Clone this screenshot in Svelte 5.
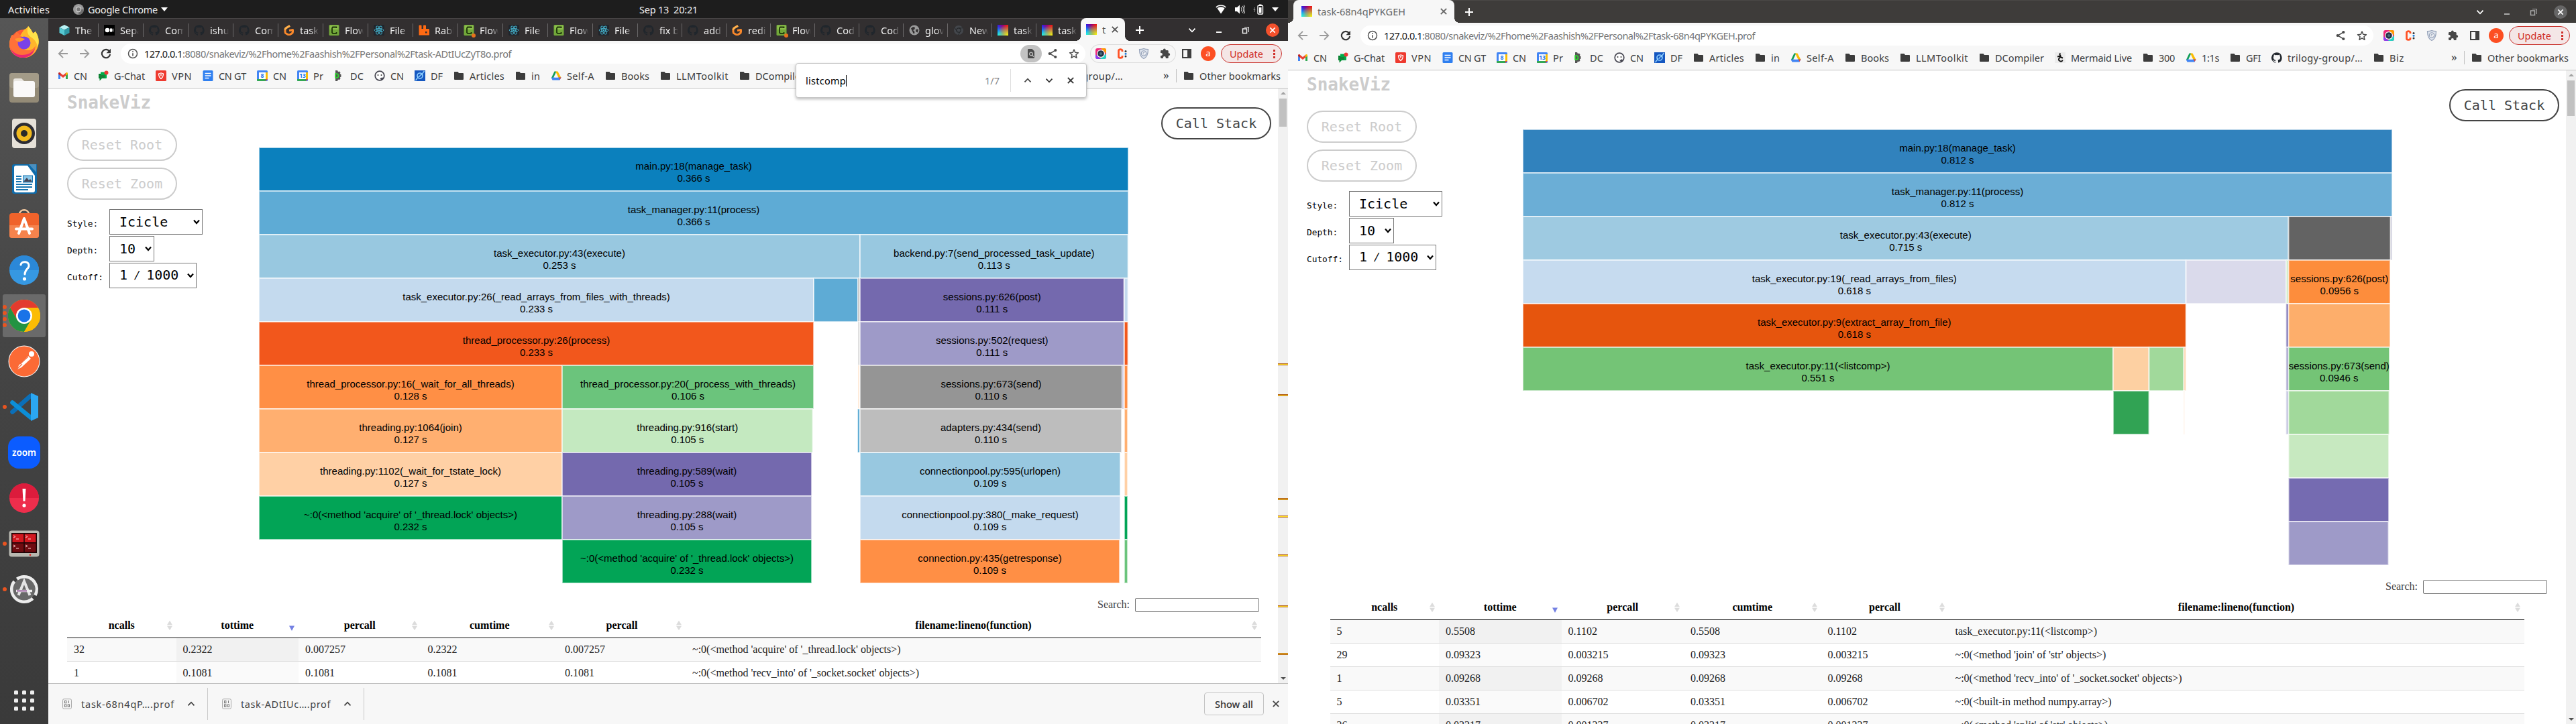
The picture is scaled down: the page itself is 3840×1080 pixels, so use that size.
<script>
  // Spread a label's letters so that it fills the given width.
  function fit(node, width) {
    if (!width) return;
    const now = node.getBoundingClientRect().width;
    const count = node.textContent.length;
    node.style.letterSpacing = (width - now) / count + 'px';
  }

  const dock = [
    { icon: 'firefox' }, { icon: 'files' }, { icon: 'rhythmbox' }, { icon: 'writer' },
    { icon: 'software' }, { icon: 'help' }, { icon: 'chrome', active: true, dots: 4 },
    { icon: 'postman' }, { icon: 'vscode', dots: 1 }, { icon: 'zoom' }, { icon: 'error' },
    { icon: 'terminator', dots: 1 }, { icon: 'updater', dots: 1 }
  ];

  const tabs = [
    ['cube', 'The'], ['medium', 'Sepa'], ['githubDark', 'Com'], ['githubDark', 'ishu'], ['githubDark', 'Com'],
    ['gorange', 'task'], ['cgreen', 'Flow'], ['react', 'File'], ['rabbit', 'Rabb'], ['cgreen', 'Flow', true],
    ['react', 'File'], ['cgreen', 'Flow'], ['react', 'File'], ['githubDark', 'fix b'], ['githubDark', 'add'],
    ['gorange', 'redi'], ['cgreen', 'Flow', true], ['githubDark', 'Cod'], ['githubDark', 'Cod'],
    ['globe', 'glov'], ['chromeDark', 'New'], ['rainbow', 'task'], ['rainbow', 'task']
  ];

  const bookmarks = [
    ['gmail', 'CN', 20], ['gchat', 'G-Chat', 46], ['vpn', 'VPN', 30], ['doc', 'CN GT', 41],
    ['cal8', 'CN', 20], ['cal13', 'Pr', 15], ['dc', 'DC', 20], ['face', 'CN', 20], ['df', 'DF', 18],
    ['folder', 'Articles', 52], ['folder', 'in', 13], ['drive', 'Self-A', 41], ['folder', 'Books', 42],
    ['folder', 'LLMToolkit', 78], ['folder', 'DCompiler', 73], ['mermaid', 'Mermaid Live', 91],
    ['folder', '300', 24], ['drive', '1:1s', 26], ['folder', 'GFI', 22], ['github', 'trilogy-group/…', 112],
    ['folder', 'Biz', 22]
  ];

  // Blocks: [row, start, end, colour, label, time]
  const chartA = [
    [0, 0, 1296, '#0b80bd', 'main.py:18(manage_task)', '0.366 s'],
    [1, 0, 1296, '#5eabd5', 'task_manager.py:11(process)', '0.366 s'],
    [2, 0, 896, '#98c8e0', 'task_executor.py:43(execute)', '0.253 s'],
    [2, 896, 1295.6, '#98c8e0', 'backend.py:7(send_processed_task_update)', '0.113 s'],
    [3, 0, 827, '#c4daee', 'task_executor.py:26(_read_arrays_from_files_with_threads)', '0.233 s'],
    [3, 827, 893, '#5eabd5'], [3, 893, 895.5, '#959595'],
    [3, 896, 1289.6, '#7469ae', 'sessions.py:626(post)', '0.111 s'],
    [3, 1290, 1295.5, '#c4daee'],
    [4, 0, 827, '#f2571c', 'thread_processor.py:26(process)', '0.233 s'],
    [4, 893, 895.5, '#bdbdbd'],
    [4, 896, 1289.6, '#9e9ac8', 'sessions.py:502(request)', '0.111 s'],
    [4, 1290, 1295.5, '#f2571c'],
    [5, 0, 452, '#ff8f45', 'thread_processor.py:16(_wait_for_all_threads)', '0.128 s'],
    [5, 452, 827, '#6bc47c', 'thread_processor.py:20(_process_with_threads)', '0.106 s'],
    [5, 893, 895, '#ffd0a5'],
    [5, 896, 1287, '#959595', 'sessions.py:673(send)', '0.110 s'],
    [5, 1286.8, 1289, '#9e9ac8'], [5, 1290, 1295.2, '#ff8f45'],
    [6, 0, 452, '#ffaf70', 'threading.py:1064(join)', '0.127 s'],
    [6, 452, 825.5, '#c4e9c0', 'threading.py:916(start)', '0.105 s'],
    [6, 892.6, 895.4, '#0b80bd'],
    [6, 896, 1286, '#bdbdbd', 'adapters.py:434(send)', '0.110 s'],
    [6, 1290, 1295, '#ffaf70'],
    [7, 0, 452, '#ffd0a5', 'threading.py:1102(_wait_for_tstate_lock)', '0.127 s'],
    [7, 452, 824, '#7469ae', 'threading.py:589(wait)', '0.105 s'],
    [7, 896, 1284, '#98c8e0', 'connectionpool.py:595(urlopen)', '0.109 s'],
    [7, 1290, 1295, '#ffd0a5'],
    [8, 0, 452, '#02a456', "~:0(<method 'acquire' of '_thread.lock' objects>)", '0.232 s'],
    [8, 452, 824, '#9e9ac8', 'threading.py:288(wait)', '0.105 s'],
    [8, 896, 1284, '#c4daee', 'connectionpool.py:380(_make_request)', '0.109 s'],
    [8, 1290, 1295, '#02a456'],
    [9, 452, 824, '#02a456', "~:0(<method 'acquire' of '_thread.lock' objects>)", '0.232 s'],
    [9, 896, 1283, '#ff8f45', 'connection.py:435(getresponse)', '0.109 s'],
    [9, 1290, 1295, '#6bc47c']
  ];
  const chartB = [
    [0, 0, 1296, '#3182bd', 'main.py:18(manage_task)', '0.812 s'],
    [1, 0, 1296, '#6baed6', 'task_manager.py:11(process)', '0.812 s'],
    [2, 0, 1141.5, '#9ecae1', 'task_executor.py:43(execute)', '0.715 s'],
    [2, 1141.5, 1294, '#636363'], [2, 1293.5, 1296, '#bdbdd0'],
    [3, 0, 988.6, '#c6dbef', 'task_executor.py:19(_read_arrays_from_files)', '0.618 s'],
    [3, 988.6, 1138, '#dadaeb'], [3, 1138, 1141.5, '#c7e9c0'],
    [3, 1141.5, 1293, '#fd8d3c', 'sessions.py:626(post)', '0.0956 s'],
    [4, 0, 988.6, '#e6550d', 'task_executor.py:9(extract_array_from_file)', '0.618 s'],
    [4, 1137.7, 1141.5, '#756bb1'], [4, 1141.5, 1293, '#fdae6b'],
    [5, 0, 880, '#74c476', 'task_executor.py:11(<listcomp>)', '0.551 s'],
    [5, 880, 933.5, '#fdd0a2'], [5, 933.5, 985.5, '#a1d99b'], [5, 985.5, 988.6, '#fdd0a2'],
    [5, 1137.7, 1141.5, '#9e9ac8'],
    [5, 1141.5, 1292, '#74c476', 'sessions.py:673(send)', '0.0946 s'],
    [6, 880, 933.5, '#31a354'], [6, 985, 986.5, '#fee6cf'], [6, 1137.7, 1141.5, '#bcbddc'],
    [6, 1141.5, 1291.5, '#a1d99b'],
    [7, 1141.5, 1291, '#c7e9c0'], [8, 1141.5, 1291, '#756bb1'], [9, 1141.5, 1290.5, '#9e9ac8']
  ];

  const headers = ['ncalls', 'tottime', 'percall', 'cumtime', 'percall', 'filename:lineno(function)'];
  const windows = [
    {
      id: 'a', url: ':8080/snakeviz/%2Fhome%2Faashish%2FPersonal%2Ftask-ADtIUcZyT8o.prof', urlWidth: 490, find: true,
      marks: bookmarks.slice(0, -1), chart: chartA,
      rows: [
        ['32', '0.2322', '0.007257', '0.2322', '0.007257', "~:0(<method 'acquire' of '_thread.lock' objects>)"],
        ['1', '0.1081', '0.1081', '0.1081', '0.1081', "~:0(<method 'recv_into' of '_socket.socket' objects>)"]
      ],
      downloads: [['task-68n4qP….prof', 139], ['task-ADtIUc….prof', 134]]
    },
    {
      id: 'b', url: ':8080/snakeviz/%2Fhome%2Faashish%2FPersonal%2Ftask-68n4qPYKGEH.prof', urlWidth: 496, find: false,
      marks: bookmarks, chart: chartB,
      rows: [
        ['5', '0.5508', '0.1102', '0.5508', '0.1102', 'task_executor.py:11(<listcomp>)'],
        ['29', '0.09323', '0.003215', '0.09323', '0.003215', "~:0(<method 'join' of 'str' objects>)"],
        ['1', '0.09268', '0.09268', '0.09268', '0.09268', "~:0(<method 'recv_into' of '_socket.socket' objects>)"],
        ['5', '0.03351', '0.006702', '0.03351', '0.006702', '~:0(<built-in method numpy.array>)'],
        ['26', '0.03217', '0.001237', '0.03217', '0.001237', "~:0(<method 'split' of 'str' objects>)"]
      ]
    }
  ];
  const findMarks = [410, 456, 611, 637, 695, 771, 842];
</script>

{#snippet octocat(color)}
  <path fill={color} d="M8 .2a8 8 0 0 0-2.5 15.6c.4 0 .5-.2.5-.4v-1.5c-2.2.5-2.7-1-2.7-1-.4-.9-.9-1.200-.9-1.200-.7-.5.1-.5.1-.5.8.1 1.200.8 1.200.8.7 1.300 1.900.9 2.300.7.1-.5.3-.9.5-1.100-1.800-.2-3.600-.9-3.600-4 0-.9.3-1.600.8-2.100-.1-.2-.4-1 .1-2.100 0 0 .7-.2 2.200.8a7.500 7.500 0 0 1 4 0c1.500-1 2.200-.8 2.200-.8.4 1.100.2 1.900.1 2.100.5.6.8 1.300.8 2.100 0 3.100-1.900 3.700-3.700 3.900.3.3.6.8.6 1.500v2.200c0 .2.1.5.6.4A8 8 0 0 0 8 .2z" />
{/snippet}

{#snippet small(name)}
  <svg class="ico" viewBox="0 0 16 16" width="16" height="16">
    {#if name === 'folder'}
      <path fill="#3c3c3c" d="M1.500 2h5l1.500 2h6a1 1 0 0 1 1 1v8a1 1 0 0 1-1 1H2a1 1 0 0 1-1-1V2.500z" />
    {:else if name === 'gmail'}
      <path fill="#4285f4" d="M1 4v9h3V6z" /><path fill="#34a853" d="M12 6v7h3V4z" />
      <path fill="#ea4335" d="M3.500 3.500 8 7l4.500-3.500V7.500L8 11 3.500 7.500z" />
      <path fill="#c5221f" d="M1 4.500C1 2.800 2.800 2.500 4 3.500v4.300L1 5.500z" /><path fill="#fbbc04" d="M15 4.500c0-1.700-1.800-2-3-1v4.300l3-2.300z" />
    {:else if name === 'gchat'}
      <path fill="#00832d" d="M1 5h5v7l-3.500 3.500V12H1z" /><path fill="#00ac47" d="M4 2.500h6l3 3V11a1 1 0 0 1-1 1H4z" />
      <path fill="#188038" d="M1 7h9v4H3z" /><circle cx="12.500" cy="3.500" r="3" fill="#ea3a35" />
    {:else if name === 'vpn'}
      <rect width="16" height="16" rx="1.500" fill="#ee3a2f" /><path d="M4.500 5 8 4l3.500 1c0 4-1 5.500-3.500 7.500C5.500 10.500 4.500 9 4.500 5z" fill="none" stroke="#fff" stroke-width="1.300" /><path d="M6.500 6h3L8 9z" fill="#fff" />
    {:else if name === 'doc'}
      <rect x=".5" width="15" height="16" rx="1.500" fill="#2f7ff0" /><path d="M3.500 4.500h9M3.500 8h9M3.500 11.500h6" stroke="#fff" stroke-width="1.600" />
    {:else if name === 'cal8' || name === 'cal13'}
      <rect width="16" height="16" rx="1.500" fill="#4285f4" /><path fill="#fbbc04" d="M13 3h3v10h-3z" /><path fill="#34a853" d="M0 13h13v3H1a1 1 0 0 1-1-1z" /><path fill="#ea4335" d="M13 13h3l-3 3z" />
      <rect x="3" y="3" width="10" height="10" fill="#fff" />
      <text x="8" y="11.200" font-size="8.500" font-weight="700" text-anchor="middle" fill="#1a73e8">{name === 'cal8' ? '8' : '13'}</text>
    {:else if name === 'dc'}
      <path fill="#555" d="M3 0h3l1 2 2-.6 1.500 1.800-.7 1.800 1.700 1.200v3.400l-1.700 1 .7 2-1.800 1.600L7 13.500 6 16H3z" transform="translate(-1 0)" />
      <path d="M2 5v6h1.500a3 3 0 0 0 0-6z" fill="none" stroke="#2be02b" stroke-width="1.600" />
    {:else if name === 'face'}
      <circle cx="8" cy="8" r="6.800" fill="#fff" stroke="#454550" stroke-width="1.700" /><circle cx="5.500" cy="7" r="1" fill="#333" /><circle cx="10.500" cy="7" r="1" fill="#333" /><path d="M8 11.500c2 0 3-.5 3.500-1.500l2 2-3 2.500z" fill="#454550" />
    {:else if name === 'df'}
      <rect width="16" height="16" fill="#1557c0" /><circle cx="8" cy="8" r="4" fill="none" stroke="#8fd0ff" stroke-width="1.600" /><path d="M1.500 15 6 9M10 7l4.500-6M7 9.500 9.500 6" stroke="#8fd0ff" stroke-width="1.400" />
    {:else if name === 'drive'}
      <path fill="#0f9d58" d="M5.500 1.500h3L3.500 12 1 11z" /><path fill="#fbbc04" d="M7 1.500h3.500L15.500 11h-4z" /><path fill="#4285f4" d="M3.500 10.500h12L13.500 14.500H2.500L.7 11z" /><path fill="#ea4335" d="M12 10.500h3.500L13.500 14z" /><path fill="#f7f7f7" d="M8 5.500 10.800 10.500H5.300z" />
    {:else if name === 'mermaid'}
      <rect width="16" height="16" fill="#ececec" /><path d="M8.500 1.500C5 4 11 5 8 7.500S5 12 8.500 13.500c1.500.5 3-.5 3-2M4 6.500l5-1M9 7.500l3 1" fill="none" stroke="#111" stroke-width="1.900" />
    {:else if name === 'github'}
      {@render octocat('#24292f')}
    {:else if name === 'githubDark'}
      {@render octocat('#20262c')}
    {:else if name === 'cube'}
      <path fill="#b8f1f4" d="M8 0 15.500 3.800 8 7.500.5 3.800z" /><path fill="#57c8d2" d="M.5 3.800 8 7.500V16L.5 12z" /><path fill="#2f98a5" d="M15.500 3.800 8 7.500V16l7.500-4z" />
    {:else if name === 'medium'}
      <rect width="16" height="16" fill="#000" /><circle cx="5" cy="8" r="3.300" fill="#fff" /><ellipse cx="10.500" cy="8" rx="1.600" ry="3.100" fill="#fff" /><ellipse cx="13.300" cy="8" rx=".7" ry="2.800" fill="#fff" />
    {:else if name === 'gorange'}
      <path d="M9 1.500 3.500 4.800A3 3 0 0 0 2 7.400v3A3 3 0 0 0 3.500 13l2.800 1.500a3 3 0 0 0 3 0l2.700-1.600A3 3 0 0 0 13.500 10V7.500L8 8.500" fill="none" stroke="#f9882b" stroke-width="3" stroke-linejoin="round" />
      <path d="m9 1.500-5.500 3.300A3 3 0 0 0 2 7.400" fill="none" stroke="#fdb04c" stroke-width="3" />
    {:else if name === 'cgreen'}
      <rect x=".5" width="15" height="16" rx="1.500" fill="#72a83a" /><path fill="#9fce58" d="M1.500 1h13v6h-13z" opacity=".6" /><path d="M11.500 5V3.500H6L5 5v6.500l1 1.300h5.500V11" fill="none" stroke="#1c3408" stroke-width="1.800" />
    {:else if name === 'react'}
      <rect width="16" height="16" rx="1.500" fill="#20252c" />
      <g fill="none" stroke="#46b6d0" stroke-width=".9"><ellipse cx="8" cy="8" rx="6.800" ry="2.600" /><ellipse cx="8" cy="8" rx="6.800" ry="2.600" transform="rotate(60 8 8)" /><ellipse cx="8" cy="8" rx="6.800" ry="2.600" transform="rotate(120 8 8)" /></g><circle cx="8" cy="8" r="1.300" fill="#46b6d0" />
    {:else if name === 'rabbit'}
      <path fill="#ff6a13" d="M.5 1.500a1 1 0 0 1 1-1h2a1 1 0 0 1 1 1V6h2.500V1.500a1 1 0 0 1 1-1h2a1 1 0 0 1 1 1V6h4a1 1 0 0 1 1 1v8.500H.5zM10 10v2.500h2.500V10z" />
    {:else if name === 'globe'}
      <circle cx="8" cy="8" r="7.500" fill="#9a9a9a" /><path d="M3 5.500 6 3l3 1-.5 2.500L6 8l2 1.500.500 3-2 .5L5 9.500zM10 7l4-.5-1 5-2.500-1z" fill="#322f30" />
    {:else if name === 'chromeDark'}
      <circle cx="8" cy="8" r="7" fill="#43464b" /><circle cx="8" cy="8" r="3.200" fill="#43464b" stroke="#26282b" stroke-width="1.200" /><path d="M8 4.800h6.500M5.200 9.600 2 4M10.800 9.600 7.500 15" stroke="#26282b" stroke-width="1" />
    {:else if name === 'find'}
      <path fill="#4a4a4a" d="M3.500 1h6l3.500 3.500v9A1.500 1.500 0 0 1 11.500 15h-7A1.500 1.500 0 0 1 3 13.500v-11z" /><circle cx="8" cy="8.500" r="2.300" fill="none" stroke="#c4c4c4" stroke-width="1.300" /><path d="m9.500 10.200 2.500 2.500" stroke="#c4c4c4" stroke-width="1.300" />
    {:else if name === 'share'}
      <path d="M12 3.200 4 8l8 4.800" fill="none" stroke="#4a4a4a" stroke-width="1.500" /><circle cx="12.300" cy="3" r="2.100" fill="#4a4a4a" /><circle cx="3.700" cy="8" r="2.100" fill="#4a4a4a" /><circle cx="12.300" cy="13" r="2.100" fill="#4a4a4a" />
    {:else if name === 'star'}
      <path d="m8 2 1.800 4.300 4.600.4-3.500 3 1.100 4.600L8 11.800l-4 2.500 1.100-4.600-3.500-3 4.600-.4z" fill="none" stroke="#4a4a4a" stroke-width="1.500" stroke-linejoin="round" />
    {:else if name === 'back'}
      <path d="M15 8H2M8 1.800 1.800 8 8 14.200" fill="none" stroke="#9b9b9b" stroke-width="1.900" />
    {:else if name === 'forward'}
      <path d="M1 8h13M8 1.800 14.200 8 8 14.200" fill="none" stroke="#9b9b9b" stroke-width="1.900" />
    {:else if name === 'reload'}
      <path d="M13 4.300A6.200 6.200 0 1 0 14.200 9" fill="none" stroke="#333" stroke-width="2.100" /><path fill="#333" d="M15 .8v6.500H8.500z" />
    {:else if name === 'info'}
      <circle cx="8" cy="8" r="6.500" fill="none" stroke="#555" stroke-width="1.500" /><path d="M8 7.200v4.300M8 4.300v1.600" stroke="#555" stroke-width="1.600" />
    {:else if name === 'lens'}
      <rect width="16" height="16" rx="3" fill="#ee2a7b" /><path fill="#ff9d00" d="M8 0h5a3 3 0 0 1 3 3v5z" /><path fill="#27d3c3" d="M16 8v5a3 3 0 0 1-3 3H6z" /><path fill="#8a3ff0" d="M0 9v4a3 3 0 0 0 3 3h5z" /><circle cx="8" cy="8" r="6" fill="#fff" /><circle cx="8" cy="8" r="4.800" fill="#243447" /><circle cx="8" cy="8" r="2" fill="#47697c" />
    {:else if name === 'cmark'}
      <path d="M8 5V3.500C8 1 2.500 1 2.500 3.500v9C2.500 15 8 15 8 12.500V11" fill="none" stroke="#ff5226" stroke-width="2.800" /><circle cx="13" cy="4.500" r="1.500" fill="#333" /><circle cx="13" cy="8.200" r="1.500" fill="#1f7ce0" /><circle cx="13" cy="12" r="1.500" fill="#333" />
    {:else if name === 'shield'}
      <path d="M8 .5c2 1 4 1.200 6.500 1.200C14.500 9 13 13 8 15.500 3 13 1.500 9 1.500 1.700 4 1.700 6 1.500 8 .5z" fill="#dfe5ee" stroke="#98a4ba" stroke-width="1.200" /><circle cx="8" cy="7.500" r="3.600" fill="#fff" stroke="#98a4ba" stroke-width="1.400" /><path d="M9.500 6.300H7v2.500h2.500" fill="none" stroke="#98a4ba" />
    {:else if name === 'puzzle'}
      <path fill="#474747" d="M13.700 7.300h-1V4.500A1.300 1.300 0 0 0 11.400 3H8.700V2.300a1.900 1.900 0 0 0-3.800 0V3H2.300A1.300 1.300 0 0 0 1 4.300V7h.9a2 2 0 0 1 0 4H1v2.600A1.300 1.300 0 0 0 2.300 15h2.500v-1a2 2 0 0 1 4 0v1h2.600a1.300 1.300 0 0 0 1.300-1.300V11h1a1.900 1.900 0 0 0 0-3.700z" />
    {:else if name === 'panel'}
      <path fill="#3f3f3f" d="M1 1h14v14H1zM3 3v10h6V3z" fill-rule="evenodd" />
    {:else if name === 'file'}
      <rect x="1.500" y=".7" width="13" height="14.600" rx="2" fill="#f4f4f4" stroke="#a9a9a9" /><g fill="none" stroke="#777"><rect x="4.500" y="3.500" width="2.400" height="3.200" /><path d="M10.500 3v4" /><rect x="4.500" y="9" width="2.400" height="3.200" /><rect x="9.200" y="9" width="2.400" height="3.200" /></g>
    {:else if name === 'up'}
      <path d="m3.500 10.300 4.500-4.600 4.500 4.600" fill="none" stroke="#444" stroke-width="1.800" />
    {:else if name === 'down'}
      <path d="m3.500 5.700 4.500 4.600 4.500-4.600" fill="none" stroke="currentColor" stroke-width="1.800" />
    {:else if name === 'cross'}
      <path d="m3.800 3.800 8.400 8.400M12.200 3.800l-8.400 8.400" fill="none" stroke="currentColor" stroke-width="1.800" />
    {:else if name === 'plus'}
      <path d="M8 2v12M2 8h12" stroke="#fff" stroke-width="2" />
    {/if}
  </svg>
{/snippet}

{#snippet favicon(name)}
  {#if name === 'rainbow'}<span class="rainbow"></span>{:else}{@render small(name)}{/if}
{/snippet}

{#snippet big(name)}
  <svg viewBox="0 0 48 48" width="48" height="48">
    {#if name === 'firefox'}
      <circle cx="24" cy="26" r="21" fill="#ff5a36" /><path fill="#ffb52b" d="M24 5c3-1 6-4 6-5 4 4 6 8 7 11l4-3c6 9 6 19 2 26-4 8-11 13-19 13C11 47 2 39 2 27c0-6 2-11 4-14l3 2 4-6 5 5z" />
      <path fill="#ff7139" d="M2 27c0-6 2-11 4-14l3 2 4-6 5 5 5 3-5 6c0 8 5 13 12 13 5 0 9-3 11-7 0 10-8 18-18 18C11 47 2 39 2 27z" /><path fill="#e6197d" d="M3 32c3 6 9 11 18 11 9 0 15-4 19-9-3 8-9 13-18 13-10 0-16-6-19-15z" opacity=".85" />
      <path fill="#ffe14a" d="M30 0c4 4 6 8 7 11l4-3c5 8 6 16 3 23-1-6-4-11-9-14-5-3-8-8-5-17z" />
      <circle cx="24" cy="25" r="9.500" fill="#7a42e8" /><path fill="#ff9a2e" d="M10 19c5-2 10-2 15 0-2 3-6 3-8 5-3-1-6-3-7-5z" />
    {:else if name === 'files'}
      <rect x="2" y="2" width="44" height="44" rx="4" fill="#948b77" /><rect x="2" y="2" width="44" height="22" rx="4" fill="#a39b88" /><path fill="#e9e6e0" d="M8 13a3 3 0 0 1 3-3h9l4 4h14v6H8z" /><rect x="8" y="14" width="32" height="24" rx="3" fill="#faf9f8" />
    {:else if name === 'rhythmbox'}
      <rect x="6" y="2" width="36" height="44" rx="4" fill="#e6e1d8" /><circle cx="24" cy="24" r="16" fill="#2c2c33" /><circle cx="24" cy="24" r="11.500" fill="#f2ba1d" /><circle cx="24" cy="24" r="5" fill="#2a2a2a" />
    {:else if name === 'writer'}
      <path fill="#0f6cab" d="M9 2h34v41a3 3 0 0 1-3 3H9a3 3 0 0 1-3-3V5a3 3 0 0 1 3-3z" /><path fill="#fff" d="M9 7a3 3 0 0 1 3-3h17l11 15v22a3 3 0 0 1-3 3H12a3 3 0 0 1-3-3z" /><path fill="#4a8fbf" d="M31 2h11v12z" /><path d="M12 20h8M12 24h8M12 28h8M12 32h24M12 36h24M12 40h18" stroke="#1775b1" stroke-width="1.800" /><rect x="22.500" y="19" width="14" height="10" fill="#8cc8ea" stroke="#1775b1" /><path d="m23 28 5-6 3 4 2-2 3 4z" fill="#445" />
    {:else if name === 'software'}
      <path d="M17 9c0-9 14-9 14 0" fill="none" stroke="#f5c9a0" stroke-width="2.500" /><rect x="2" y="7" width="44" height="37" rx="4" fill="#f0632b" /><path fill="#f5834d" d="M2 25h44v15a4 4 0 0 1-4 4H6a4 4 0 0 1-4-4z" /><path d="M16 37 24 15l8 22M12 30.500h24" fill="none" stroke="#fff" stroke-width="4" stroke-linejoin="round" stroke-linecap="round" />
    {:else if name === 'help'}
      <circle cx="24" cy="24" r="22" fill="#3698e2" /><path fill="#2b88d8" d="M2 24a22 22 0 0 1 44 0z" /><path d="M19 16c1-6 13-6 12 2-.5 4-6 5-6 12" fill="none" stroke="#fff" stroke-width="3" stroke-linecap="round" /><circle cx="24.500" cy="37" r="2.600" fill="#fff" />
    {:else if name === 'chrome'}
      <circle cx="24" cy="24" r="24" fill="#fbbc04" /><path fill="#e33b2e" d="M3.200 12A24 24 0 0 1 44.800 12H24L13.600 30z" /><path fill="#229342" d="M3.200 12A24 24 0 0 0 24 48l10.400-18-10.400 6-10.400-6z" /><path fill="#fbbc04" d="M24 48a24 24 0 0 0 20.800-36H24l10.400 18z" /><circle cx="24" cy="24" r="12" fill="#fff" /><circle cx="24" cy="24" r="9.400" fill="#1a73e8" />
    {:else if name === 'postman'}
      <circle cx="24" cy="24" r="23.500" fill="#fff" /><circle cx="24" cy="24" r="22.500" fill="#fb6a35" /><circle cx="35" cy="13" r="4" fill="#fff" /><path fill="#fff" d="m30 16 4 4-14 13-6 3 2-6z" /><path d="m13 36 8-8M18 28l12-11" stroke="#f2693c" stroke-width="1.200" />
    {:else if name === 'vscode'}
      <path d="M6.500 31.500 33 8" stroke="#0b6fb8" stroke-width="6.500" stroke-linecap="round" /><path d="M6.500 17.500 34 40" stroke="#0c8fd8" stroke-width="6.500" stroke-linecap="round" /><path fill="#2ba7f2" d="M34 3l11 5v32l-11 5z" />
    {:else if name === 'zoom'}
      <rect width="48" height="48" rx="16" fill="#0b5cff" /><text x="24" y="28.500" font-size="13.500" font-weight="600" fill="#fff" text-anchor="middle">zoom</text>
    {:else if name === 'error'}
      <circle cx="24" cy="24" r="22" fill="#ee2e4c" /><path fill="#dc1c3c" d="M2 24a22 22 0 0 1 44 0z" /><path fill="#fff" d="M21.500 10h5l-1 18.500h-3z" /><circle cx="24" cy="35" r="2.600" fill="#fff" />
    {:else if name === 'terminator'}
      <rect x="1.500" y="4.500" width="45" height="39" rx="4" fill="#b8b8b0" /><rect x="5" y="8" width="38" height="30" fill="#180305" /><path fill="#d2171f" d="M6.500 9.500h16.800v12.500H6.500zM24.700 9.500h16.800v12.500H24.700z" /><path fill="#6f0b10" d="M6.500 23.500h16.800V36.500H6.500zM24.700 23.500h16.800V36.500H24.700z" /><g stroke="#ffd0d0" fill="none"><path d="m8 12 3 1.500L8 15M12 17h4M26 12l3 1.500-3 1.500M30 17h4M8 26l3 1.500L8 29M12 31h4M26 26l3 1.500-3 1.500M30 31h4" /></g><circle cx="33" cy="40.800" r="1.300" fill="#e02020" />
    {:else if name === 'updater'}
      <circle cx="24" cy="24" r="17" fill="#686868" /><circle cx="24" cy="24" r="18.800" fill="none" stroke="#ececec" stroke-width="4.500" stroke-dasharray="50 6 56 6" transform="rotate(-125 24 24)" /><path d="M15.500 33 24 12l8.500 21" fill="none" stroke="#e4e4e4" stroke-width="4" /><path d="M12 26.500h24" stroke="#f0f0f0" stroke-width="3.500" /><path d="M13 26.500h15" stroke="#8a4a8e" stroke-width="1.800" />
    {/if}
  </svg>
{/snippet}

{#snippet controls()}
  <div class="controls">
    <span class="ctl chev">{@render small('down')}</span>
    <span class="ctl"><i class="min"></i></span>
    <span class="ctl restore"><svg viewBox="0 0 12 12" width="12" height="12"><rect x="1.500" y="4" width="6" height="6.500" fill="none" stroke="currentColor" stroke-width="1.500" /><path d="M4 1.500h6.500V9" fill="none" stroke="currentColor" /></svg></span>
    <span class="ctl"><b class="close">{@render small('cross')}</b></span>
  </div>
{/snippet}

{#snippet selectBox(label, kind)}
  <div class="field">
    <span class="label">{label}</span>
    <span class="select {kind}">
      {#if kind === 'cutoff'}<span class="cut">1 <i>/</i> 1000</span>{:else if kind === 'depth'}<span>10</span>{:else}<span>Icicle</span>{/if}
      <svg viewBox="0 0 10 8" width="10" height="8"><path d="m1 1.500 4 4.500 4-4.500" fill="none" stroke="#000" stroke-width="2.200" /></svg>
    </span>
  </div>
{/snippet}

<div class="screen">
  <div class="left-screen">
    <header class="topbar">
      <span class="activities" use:fit={62}>Activities</span>
      <svg class="appicon" viewBox="0 0 16 16" width="16" height="16"><circle cx="8" cy="8" r="8" fill="#9c9c9c" /><path d="M8 8h8A8 8 0 0 1 8 16z" fill="#6d6d6d" /><circle cx="8" cy="8" r="4.200" fill="#d5d5d5" /><circle cx="8" cy="8" r="3" fill="#777" /></svg>
      <span class="appname" use:fit={104}>Google Chrome</span>
      <i class="caret"></i>
      <span class="clock" use:fit={87}>Sep 13&nbsp; 20:21</span>
      <span class="status">
        <svg viewBox="0 0 16 16" width="16" height="16"><path d="M.8 5C4.500 1 11.500 1 15.200 5" fill="none" stroke="#fff" stroke-width="1.400" /><path fill="#fff" d="M2.500 6.500c3-3 8-3 11 0L8 14.500z" /></svg>
        <svg viewBox="0 0 16 16" width="16" height="16"><path fill="#fff" d="M1 5h3l4-3.500v13L4 11H1z" /><path d="M10 5c1.300 1.500 1.300 4.500 0 6M12 3c2.500 2.500 2.500 7.500 0 10M14 1.500c3 3.500 3 9.500 0 13" fill="none" stroke="#ccc" stroke-width="1.100" /></svg>
        <svg viewBox="0 0 16 16" width="16" height="16"><path d="M2.500 5 1 8.500h2L1.500 12" fill="none" stroke="#999" /><rect x="7" y="2.200" width="7.500" height="12.800" rx="1" fill="none" stroke="#fff" stroke-width="1.400" /><path fill="#fff" d="M9 .5h3.500v2H9zM9 5h3.500v8H9z" /></svg>
        <i class="caret"></i>
      </span>
    </header>
    <div class="desktop">
      <aside class="dock">
        {#each dock as d}
          <div class="tile" class:active={d.active}>
            {#if d.dots}<span class="dots">{#each Array(d.dots) as _}<i></i>{/each}</span>{/if}
            {@render big(d.icon)}
          </div>
        {/each}
        <div class="apps">{#each Array(9) as _}<i></i>{/each}</div>
      </aside>
      {@render browser(windows[0])}
    </div>
  </div>
  {@render browser(windows[1])}
</div>

{#snippet browser(w)}
  <section class="window {w.id}">
    <div class="tabstrip">
      {#if w.id === 'a'}
        {#each tabs as t, i}
          <div class="tab" class:wide={i < 13} class:last={i === tabs.length - 1}>
            <span class="fav">{@render favicon(t[0])}{#if t[2]}<i class="badge"></i>{/if}</span>
            <span class="title">{t[1]}</span>
          </div>
        {/each}
        <div class="tab current"><span class="fav">{@render favicon('rainbow')}</span><span class="title">t</span>{@render small('cross')}</div>
      {:else}
        <div class="tab current"><span class="fav">{@render favicon('rainbow')}</span><span class="title full" use:fit={131}>task-68n4qPYKGEH</span>{@render small('cross')}</div>
      {/if}
      <span class="plus">{@render small('plus')}</span>
      {@render controls()}
    </div>

    <div class="toolbar">
      <span class="nav">{@render small('back')}</span><span class="nav">{@render small('forward')}</span><span class="nav">{@render small('reload')}</span>
      <div class="omnibox">
        {@render small('info')}
        <span class="host" use:fit={57}>127.0.0.1</span><span class="path" use:fit={w.urlWidth}>{w.url}</span>
        <span class="omni-actions">
          {#if w.find}<span class="slot found">{@render small('find')}</span>{/if}
          <span class="slot">{@render small('share')}</span><span class="slot">{@render small('star')}</span>
        </span>
      </div>
      <div class="exts" class:outlined={w.find}>
        <span class="slot">{@render small('lens')}</span><span class="slot">{@render small('cmark')}</span><span class="slot">{@render small('shield')}</span><span class="slot">{@render small('puzzle')}</span>
      </div>
      <span class="slot panel">{@render small('panel')}</span>
      <span class="slot"><b class="avatar">a</b></span>
      <div class="update"><span use:fit={50}>Update</span><i></i></div>
    </div>

    <div class="bookmarks">
      {#each w.marks as m}
        <div class="mark">{@render small(m[0])}<span use:fit={m[2]}>{m[1]}</span></div>
      {/each}
      <div class="more"><span class="chevs">»</span><i></i>{@render small('folder')}<span use:fit={121}>Other bookmarks</span></div>
    </div>

    {#if w.find}
      <div class="findbar">
        <span class="query" use:fit={60}>listcomp</span><i class="cursor"></i>
        <span class="count">1/7</span>
        <span class="slot">{@render small('up')}</span><span class="slot">{@render small('down')}</span><span class="slot">{@render small('cross')}</span>
      </div>
    {/if}

    <div class="view">
      <div class="page">
        <div class="top">
          <div class="side">
            <h1>SnakeViz</h1>
            <button class="faded">Reset Root</button>
            <button class="faded">Reset Zoom</button>
            {@render selectBox('Style:', 'style')}
            {@render selectBox('Depth:', 'depth')}
            {@render selectBox('Cutoff:', 'cutoff')}
          </div>
          <svg class="chart" width="1298" height="652" viewBox="-1 -1 1298 652">
            {#each w.chart as [row, a, b, color, label, time]}
              <rect x={a} y={row * 65} width={b - a} height="65" fill={color} stroke="#fff" stroke-width="2" stroke-opacity=".6" />
              {#if label}
                <text x={(a + b) / 2} y={row * 65 + 33}>{label}</text>
                <text x={(a + b) / 2} y={row * 65 + 51}>{time}</text>
              {/if}
            {/each}
          </svg>
          <button class="stack">Call Stack</button>
        </div>
        <div class="stats">
          <div class="search">Search:<span class="input"></span></div>
          <table>
            <colgroup><col class="c1" /><col class="c2" /><col class="c2" /><col class="c4" /><col class="c5" /><col class="c6" /></colgroup>
            <thead>
              <tr>
                {#each headers as h, i}
                  <th><div>{h}<svg class="sort" viewBox="0 0 8 16" width="8" height="16">{#if i === 1}<path d="M0 8.500h8L4 16z" fill="#7481e3" />{:else}<path d="M0 7.200 4 .8l4 6.400zM0 8.800h8L4 15.200z" fill="#dcdcdc" />{/if}</svg></div></th>
                {/each}
              </tr>
            </thead>
            <tbody>
              {#each w.rows as r}<tr>{#each r as c}<td>{c}</td>{/each}</tr>{/each}
            </tbody>
          </table>
        </div>
      </div>
      <div class="scrollbar">
        <i class="up"></i><b></b><i class="dn"></i>
        {#if w.find}{#each findMarks as y}<em style="top: {y}px"></em>{/each}{/if}
      </div>
    </div>

    {#if w.downloads}
      <footer>
        {#each w.downloads as d}
          <div class="dl">{@render small('file')}<span use:fit={d[1]}>{d[0]}</span>{@render small('up')}</div>
        {/each}
        <span class="showall"><span use:fit={57}>Show all</span></span>
        <span class="bye">{@render small('cross')}</span>
      </footer>
    {/if}
  </section>
{/snippet}

<style>
  :global(body) { margin: 0; overflow: hidden; }
  .screen { display: flex; width: 3840px; height: 1080px; overflow: hidden; background: #fff; font: 14.5px/20px "Noto Sans", "Open Sans", sans-serif; white-space: nowrap; }
  .screen * { box-sizing: border-box; }
  svg { display: block; flex: none; }
  .screen span { flex-shrink: 0; }
  .left-screen { width: 1920px; display: flex; flex-direction: column; background: #322f30; }
  .topbar { position: relative; height: 27px; background: #1d1d1d; color: #f0f0f0; display: flex; align-items: center; padding-left: 12px; }
  .appicon { margin-left: 35px; }
  .appname { margin-left: 6px; }
  .caret { width: 0; height: 0; border: 5px solid transparent; border-top: 6px solid #fff; border-bottom: 0; margin-left: 5px; }
  .clock { margin-left: 703px; }
  .status { margin-left: auto; margin-right: 14px; display: flex; align-items: center; gap: 12px; }
  .status .caret { margin-left: 0; }
  .desktop { display: flex; flex: 1; min-height: 0; }
  .dock { width: 72px; padding: 3px 4px 0; background: linear-gradient(#565656, #454545 45%, #3a3a3a); display: flex; flex-direction: column; gap: 4px; border-top: 1px solid #555; }
  .tile { position: relative; height: 64px; display: flex; align-items: center; justify-content: center; border-radius: 3px; }
  .tile.active { background: #6a6a6a; }
  .dots { position: absolute; left: 0; top: 0; bottom: 0; display: flex; flex-direction: column; justify-content: center; gap: 3px; }
  .dots i { width: 6px; height: 6px; border-radius: 50%; background: #e95420; }
  .apps { display: grid; grid-template-columns: repeat(3, 6px); gap: 6px; margin: 115px 0 0 17px; }
  .apps i { height: 6px; border-radius: 1.500px; background: #eee; }

  .window { position: relative; display: flex; flex-direction: column; background: #f7f7f7; color: #3c3c3c; overflow: hidden; }
  .a { width: 1848px; }
  .b { width: 1920px; }
  .tabstrip { position: relative; flex: none; height: 34px; display: flex; align-items: center; padding-left: 8px; color: #eee; }
  .a .tabstrip { background: #322f30; border-top: 1px solid #484546; }
  .b .tabstrip { background: #3e3c3a; border-top: 1px solid #4a4846; }
  .tab { flex: none; width: 66px; height: 20px; padding-left: 8px; display: flex; align-items: center; border-right: 1px solid #6b696a; }
  .tab.wide { width: 67px; }
  .tab.last { border-right-color: transparent; }
  .fav { position: relative; width: 16px; height: 16px; }
  .badge { position: absolute; right: -2px; bottom: -3px; width: 6px; height: 6px; border-radius: 50%; background: #e8711c; }
  .rainbow { display: block; width: 16px; height: 16px; background: radial-gradient(circle at 100% 100%, #ff0, transparent 75%), radial-gradient(circle at 100% 0, #f00, transparent 75%), radial-gradient(circle at 0 100%, #0ff, transparent 75%), #20f; }
  .title { width: 28px; margin-left: 8px; overflow: hidden; mask-image: linear-gradient(90deg, #000 60%, transparent); }
  .tab.current { position: relative; height: 34px; margin-top: -1px; background: #f7f7f7; border: 0; border-radius: 8px 8px 0 0; color: #555; }
  .tab.current::before, .tab.current::after { content: ""; position: absolute; bottom: 0; width: 8px; height: 8px; }
  .tab.current::before { left: -8px; background: radial-gradient(circle at 0 0, transparent 8px, #f7f7f7 8px); }
  .tab.current::after { right: -8px; background: radial-gradient(circle at 100% 0, transparent 8px, #f7f7f7 8px); }
  .a .current .title { width: 12px; margin-right: -1px; mask-image: none; }
  .b .tab.current { width: 240px; padding-left: 12px; color: #666; }
  .title.full { width: auto; mask-image: none; margin-right: 49px; }
  .plus { margin-left: 14px; }
  .controls { margin-left: auto; display: flex; margin-right: 3px; color: #f3f3f3; }
  .b .controls { color: #aaa; }
  .ctl { width: 40px; height: 20px; display: flex; align-items: center; justify-content: center; }
  .ctl.chev { color: #fff; }
  .min { width: 8px; height: 1.500px; margin-top: 7px; background: currentColor; }
  .close { width: 20px; height: 20px; border-radius: 50%; background: #f4512c; color: #fff; display: grid; place-items: center; }
  .close :global(svg) { width: 14px; height: 14px; }
  .b .close { background: #666; }

  .toolbar { flex: none; height: 38px; display: flex; align-items: center; padding: 0 9px 0 6px; }
  .nav, .slot { width: 32px; display: flex; justify-content: center; align-items: center; }
  .omnibox { flex: 1; height: 30px; margin-left: 6px; margin-right: 7px; border-radius: 15px; background: #fff; display: flex; align-items: center; padding-left: 10px; }
  .host { color: #111; margin-left: 9px; }
  .path { color: #757575; }
  .omni-actions { display: flex; margin-left: auto; margin-right: 1px; }
  .found { height: 26px; border-radius: 13px; background: #c2c2c2; }
  .exts { display: flex; height: 28px; align-items: center; }
  .outlined { box-shadow: inset 0 0 0 1px #dcdcdc; border-radius: 14px; }
  .avatar { width: 22px; height: 22px; border-radius: 50%; background: #fc4f22; color: #fff; font-weight: 400; font-size: 13px; line-height: 21px; text-align: center; }
  .update { width: 91px; height: 28px; margin-left: 3px; border: 1px solid #c9302b; border-radius: 14px; background: #f4e6e6; color: #d02f29; display: flex; align-items: center; padding-left: 12px; }
  .update i { width: 3px; height: 15px; margin-left: 15px; background: radial-gradient(circle, #d02f29 1.500px, transparent 1.700px) 0 0 / 3px 5px; }

  .bookmarks { flex: none; height: 33px; display: flex; align-items: center; padding: 0 0 5px 14px; gap: 16px; border-bottom: 1px solid #c1c1c1; }
  .mark { display: flex; gap: 8px; flex: none; }
  .mark :global(svg), .more :global(svg) { margin-top: 2px; }
  .more { margin-left: auto; margin-right: 11px; display: flex; }
  .chevs { width: 11px; font-size: 17px; line-height: 18px; }
  .more i { width: 1px; height: 20px; margin: 0 10px 0 8px; background: #c1c1c1; }
  .more span:last-child { margin-left: 8px; }

  .findbar { position: absolute; left: 1114px; top: 67px; width: 434px; height: 52px; z-index: 2; background: #fff; border: 1px solid #c4c4c4; border-radius: 4px; box-shadow: 0 2px 4px #0004; display: flex; align-items: center; padding: 0 7px 0 14px; color: #333; }
  .query { color: #000; }
  .cursor { width: 1px; height: 17px; background: #000; }
  .count { margin-left: auto; margin-right: 9px; padding-right: 16px; line-height: 34px; border-right: 1px solid #ddd; color: #888; }

  .view { flex: 1; min-height: 0; display: flex; background: #fff; overflow: hidden; }
  .page { flex: 1; min-width: 0; color: #000; }
  .top { height: 738px; display: flex; align-items: flex-start; }
  .side { width: 313px; padding-left: 28px; }
  .b .side { width: 349px; }
  h1 { margin: 0; height: 60px; padding-top: 6px; font: 700 26px/30px "DejaVu Sans Mono", monospace; color: #ccc; }
  button { display: block; padding: 0; width: 164px; height: 48px; border: 2px solid #444; border-radius: 24px; background: #fff; color: #444; font: 20px/44px "DejaVu Sans Mono", monospace; }
  .faded { border-color: #ccc; color: #ccc; margin-bottom: 10px; }
  .stack { margin: 28px 10px 0 auto; }
  .field { display: flex; height: 38px; margin-bottom: 2px; align-items: center; font-family: "DejaVu Sans Mono", monospace; }
  .faded + .field { margin-top: 14px; }
  .label { width: 63px; font-size: 12.800px; padding-top: 5px; }
  .select { height: 38px; border: 1px solid #767676; display: flex; align-items: center; justify-content: space-between; padding: 0 3px 0 14px; font-size: 20px; }
  .style { width: 139px; }
  .depth { width: 67px; }
  .cutoff { width: 130px; }
  .cut { word-spacing: -4px; }
  .cut i { font: 18px "Liberation Sans", sans-serif; display: inline-block; width: 12px; text-align: center; transform: skewX(-14deg); }
  .chart { margin-top: 87px; }
  .chart text { font: 15px "Liberation Sans", sans-serif; fill: #000; text-anchor: middle; }

  .stats { width: 1777px; margin-left: 28px; padding-top: 22px; font: 16px/20px "Liberation Serif", serif; }
  .b .stats { width: 1849px; }
  .search { display: flex; justify-content: flex-end; height: 22px; color: #444; }
  .input { width: 185px; height: 21px; margin-left: 8px; border: 1px solid #777; border-radius: 2px; }
  table { width: 1780px; table-layout: fixed; border-collapse: separate; border-spacing: 0; }
  .b table { margin-left: 34.500px; }
  .c1 { width: 162.500px; } .c2 { width: 182.500px; } .c4 { width: 204.500px; } .c5 { width: 190px; } .c6 { width: 858px; }
  th { height: 38px; padding: 0; border-bottom: 1px solid #111; font-weight: 700; }
  th div { position: relative; line-height: 36px; }
  .sort { position: absolute; right: 6px; top: 10px; }
  td { height: 35px; padding: 0 10px; border-bottom: 1px solid #ddd; color: #222; }
  tbody tr:nth-child(odd) td { background: #f9f9f9; }
  tbody tr td:nth-child(2) { background: #fafafa; }
  tbody tr:nth-child(odd) td:nth-child(2) { background: #f1f1f1; }

  .scrollbar { position: relative; width: 15px; background: #f1f1f1; display: flex; flex-direction: column; align-items: center; }
  .scrollbar i { width: 0; height: 0; border: 4px solid transparent; }
  .up { margin-top: 1px; border-bottom-color: #a3a3a3 !important; }
  .dn { margin-top: auto; margin-bottom: 1px; border-top-color: #505050 !important; }
  .scrollbar b { width: 11px; height: 42px; margin-top: 6px; background: #c1c1c1; }
  .b .scrollbar b { height: 53px; }
  .scrollbar em { position: absolute; left: 0; width: 15px; height: 3px; background: #ffdd22; border: solid #b5651d; border-width: 1px 0; }

  footer { flex: none; height: 61px; border-top: 1px solid #bdbdbd; background: #f7f7f7; display: flex; align-items: center; color: #444; }
  .dl { height: 48px; display: flex; align-items: center; padding: 0 16px 0 20px; gap: 13px; border-right: 1px solid #c9c9c9; }
  .dl span { margin-right: 4px; }
  .showall { width: 89px; height: 34px; margin-left: auto; border: 1px solid #c4c4c4; border-radius: 4px; display: grid; place-items: center; font-weight: 500; color: #333; }
  .bye { margin: 0 10px; }
</style>
